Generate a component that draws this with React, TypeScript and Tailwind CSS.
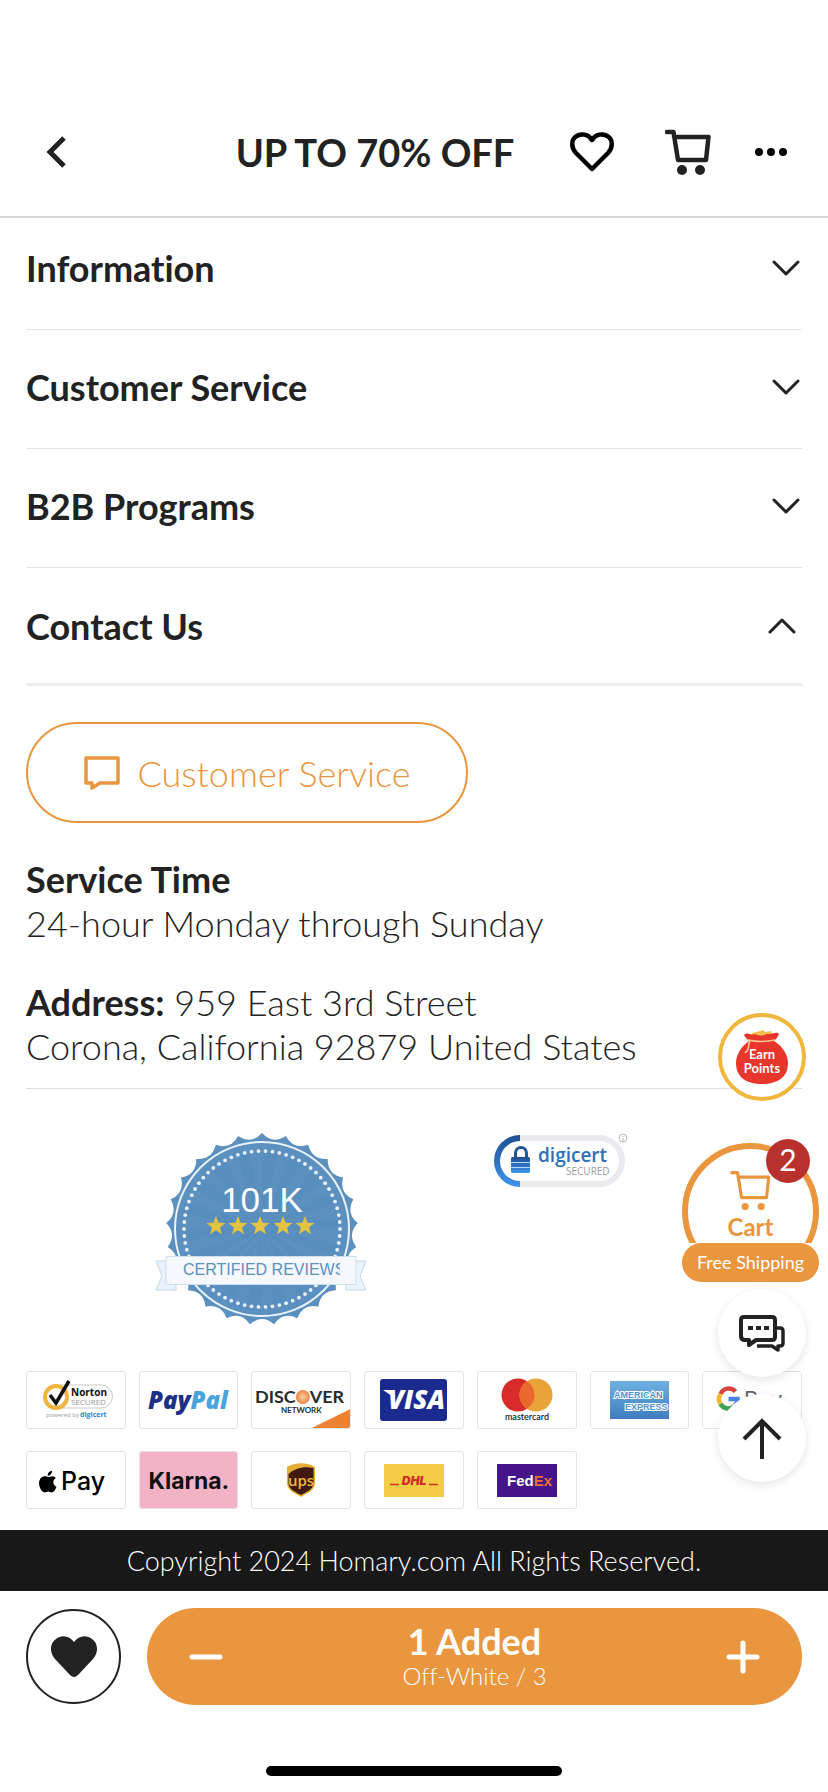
import { useState } from 'react';

const SECTIONS = ['Information', 'Customer Service', 'B2B Programs', 'Contact Us'];

// Star-edged outline of the review seal
const SPIKES = 25;
const sealPoint = (radius: number, step: number) => {
  const angle = (step / SPIKES) * Math.PI * 2;
  return `${(107 + radius * Math.sin(angle)).toFixed(2)} ${(97 - radius * Math.cos(angle)).toFixed(2)}`;
};
const SEAL_PATH =
  `M${sealPoint(96, 0)}` +
  Array.from({ length: SPIKES }, (_, i) => `Q${sealPoint(85, i + 0.5)} ${sealPoint(96, i + 1)}`).join('') +
  'Z';

function BackIcon() {
  return (
    <svg width="20" height="32" viewBox="0 0 20 32" fill="none" stroke="#222" strokeWidth="5">
      <path d="M18 2 4 16l14 14" />
    </svg>
  );
}

function HeartIcon() {
  return (
    <svg width="44" height="40" viewBox="0 0 44 40" fill="none" stroke="#000" strokeWidth="4.500" strokeLinejoin="round">
      <path d="M22 37 6 21C1 15.500 1 8 6 4.300 11 1 18.500 2 22 8 25.500 2 33 1 38 4.300c5 3.700 5 11.200 0 16.700Z" />
    </svg>
  );
}

function CartIcon({ thin = false }: { thin?: boolean }) {
  return (
    <svg
      width={thin ? 43 : 46}
      height={thin ? 41 : 46}
      viewBox="0 0 46 46"
      fill="none"
      stroke="currentColor"
      strokeWidth={thin ? 3.500 : 4.500}
      strokeLinecap="round"
      strokeLinejoin="round"
    >
      <path d="M2 3h6.500l4.500 28h28L43.500 8H9" />
      <circle cx="17" cy="41" r={thin ? 4 : 5} fill="currentColor" stroke="none" />
      <circle cx="35" cy="41" r={thin ? 4 : 5} fill="currentColor" stroke="none" />
    </svg>
  );
}

function Chevron({ up }: { up: boolean }) {
  return (
    <svg
      className={up ? 'mr-[6px] rotate-180' : 'mr-[2px]'}
      width="28"
      height="16"
      viewBox="0 0 28 16"
      fill="none"
      stroke="#222"
      strokeWidth="3"
      strokeLinecap="round"
      strokeLinejoin="round"
    >
      <path d="m2 2 12 12L26 2" />
    </svg>
  );
}

function ReviewSeal() {
  return (
    <svg width="212" height="194" viewBox="0 0 212 194" role="img" aria-label="Certified reviews">
      <path d={SEAL_PATH} fill="#5b90bf" />
      {Array.from({ length: 18 }, (_, i) => (
        <path key={i} d="M107 97 100 20h14Z" fill="#4f86b8" opacity="0.25" transform={`rotate(${i * 20 + 6} 107 97)`} />
      ))}
      <circle cx="107" cy="97" r="87" fill="none" stroke="#e8f3fc" strokeWidth="2" />
      {Array.from({ length: 70 }, (_, i) => {
        const a = (i / 70) * Math.PI * 2;
        return <circle key={i} cx={107 + 78 * Math.cos(a)} cy={97 + 78 * Math.sin(a)} r="1.900" fill="#e8f3fc" />;
      })}
      <text x="107" y="80" textAnchor="middle" fontFamily="Liberation Sans, sans-serif" fontSize="35" fill="#fff">
        101K
      </text>
      {[61, 83, 105, 128, 150].map((x) => (
        <path
          key={x}
          transform={`translate(${x} 94)`}
          d="M0-10 2.600-3.300 9.500-3 4.100 1.400 6 8.200 0 4.300-6 8.200-4.100 1.400-9.500-3-2.600-3.300Z"
          fill="#e3c341"
        />
      ))}
      <path d="M12 129H1l6 15-6 14h20v-6H12ZM200 129h11l-6 15 6 14h-20v-6h9Z" fill="#e9f3fd" stroke="#c3d6ea" />
      <path d="M11 124.500h190v28H11Z" fill="#f5f9fe" stroke="#cfdff0" />
      <svg x="27" y="125" width="158" height="27">
        <text x="1" y="18" fontFamily="Liberation Sans, sans-serif" fontSize="16" fill="#5b90bf">
          CERTIFIED REVIEWS
        </text>
      </svg>
    </svg>
  );
}

function DigicertBadge() {
  return (
    <svg width="136" height="58" viewBox="0 0 136 58" role="img" aria-label="DigiCert secured">
      <defs>
        <linearGradient id="digi" x1="0" y1="0" x2="0" y2="1">
          <stop offset="0" stopColor="#1f4f8f" />
          <stop offset="1" stopColor="#3f95f0" />
        </linearGradient>
      </defs>
      <rect x="3" y="6" width="125" height="46" rx="23" fill="#fff" stroke="#e9ebee" strokeWidth="6" />
      <path d="M26 3a26 26 0 0 0 0 52v-6a20 20 0 0 1 0-40Z" fill="url(#digi)" />
      <path d="M21.500 26v-5a5.500 5.500 0 0 1 11 0v5" fill="none" stroke="#1f5798" strokeWidth="3" />
      <rect x="17" y="25" width="19" height="16" rx="1.500" fill="url(#digi)" />
      <path d="M17 30.500h19M17 35.500h19" stroke="#b9d7f5" />
      <text x="44" y="30" fontFamily="Open Sans, sans-serif" fontSize="19" fontWeight="600" fill="#2d70b8">
        digicert
      </text>
      <text x="72" y="43" fontFamily="Open Sans, sans-serif" fontSize="10" fill="#9a9da1">
        SECURED
      </text>
      <circle cx="129" cy="6" r="4" fill="#fff" stroke="#b8b8b8" />
      <path d="M129 4v1M129 6v3" stroke="#b8b8b8" />
    </svg>
  );
}

function Norton() {
  return (
    <svg width="78" height="44" viewBox="0 0 78 44">
      <path d="M22 7h42a11 11 0 0 1 0 23H22" fill="none" stroke="#c9c9c9" />
      <circle cx="19" cy="19" r="11" fill="#fff" stroke="#efb53f" strokeWidth="4" />
      <path d="m13 17 6 8L32 3" fill="none" stroke="#111" strokeWidth="3.500" />
      <text x="34" y="18" fontFamily="Open Sans, sans-serif" fontSize="10" fontWeight="700" fill="#111">
        Norton
      </text>
      <text x="34" y="27" fontFamily="Open Sans, sans-serif" fontSize="8" fill="#999">
        SECURED
      </text>
      <text x="9" y="39" fontFamily="Open Sans, sans-serif" fontSize="6" fill="#999">
        powered by
      </text>
      <text x="43" y="39" fontFamily="Open Sans, sans-serif" fontSize="7" fontWeight="700" fill="#2b84d6">
        digicert
      </text>
    </svg>
  );
}

function PayPal() {
  return (
    <svg width="92" height="40" viewBox="0 0 92 40">
      <text x="5" y="29" fontFamily="Open Sans, sans-serif" fontSize="24" fontWeight="800" fontStyle="italic" fill="#1c2f84">
        Pay<tspan fill="#4aa3db">Pal</tspan>
      </text>
    </svg>
  );
}

function Discover() {
  return (
    <svg className="h-full w-full" viewBox="0 0 98 56">
      <defs>
        <radialGradient id="disc">
          <stop offset="0" stopColor="#fbd0a4" />
          <stop offset="1" stopColor="#ee8442" />
        </radialGradient>
      </defs>
      <path d="M58 57 99 37v20Z" fill="#ec8234" />
      <g fontFamily="Lato, sans-serif" fill="#2a2a2a" fontWeight="700">
        <text x="3" y="31" fontSize="18">
          DISC
        </text>
        <text x="58" y="31" fontSize="18">
          VER
        </text>
        <text x="29" y="41" fontSize="8">
          NETWORK
        </text>
      </g>
      <circle cx="51" cy="25" r="7" fill="url(#disc)" />
    </svg>
  );
}

function Visa() {
  return (
    <svg width="67" height="42" viewBox="0 0 67 42">
      <rect width="67" height="42" rx="3" fill="#1a2a8f" />
      <path d="M3 11h8l4 8Z" fill="#fff" />
      <text x="8" y="30" fontFamily="Open Sans, sans-serif" fontSize="26" fontWeight="800" fontStyle="italic" fill="#fff">
        VISA
      </text>
    </svg>
  );
}

function Mastercard() {
  return (
    <svg width="52" height="44" viewBox="0 0 52 44">
      <circle cx="17" cy="17" r="16.500" fill="#d92b2b" />
      <circle cx="35" cy="17" r="16.500" fill="#e8a33b" />
      <path d="M26 3.200a16.500 16.500 0 0 1 0 27.600 16.500 16.500 0 0 1 0-27.600Z" fill="#ea682d" />
      <text x="26" y="42" textAnchor="middle" fontFamily="Lato, sans-serif" fontSize="9" fontWeight="600" fill="#222">
        mastercard
      </text>
    </svg>
  );
}

function Amex() {
  return (
    <svg width="59" height="38" viewBox="0 0 59 38">
      <defs>
        <linearGradient id="amex" x1="0" y1="0" x2="0" y2="1">
          <stop offset="0" stopColor="#6db1e0" />
          <stop offset="1" stopColor="#3f7dbf" />
        </linearGradient>
      </defs>
      <rect width="59" height="38" fill="url(#amex)" />
      <g fontFamily="Liberation Sans, sans-serif" fontWeight="700" fill="#4f94d0" stroke="#fff" strokeWidth="2" paintOrder="stroke">
        <text x="4" y="17" fontSize="9">
          AMERICAN
        </text>
        <text x="15" y="29" fontSize="9">
          EXPRESS
        </text>
      </g>
    </svg>
  );
}

function GooglePay() {
  return (
    <svg width="72" height="32" viewBox="0 0 72 32">
      <g fill="none" strokeWidth="4.500">
        <path d="M19.500 7.500A9 9 0 0 0 4.500 10" stroke="#d9453a" />
        <path d="M4.500 10a9 9 0 0 0 0 10" stroke="#f2bb2e" />
        <path d="M4.500 20a9 9 0 0 0 14 2" stroke="#3fa353" />
        <path d="M18.500 22a9 9 0 0 0 3-7h-9" stroke="#4b80e8" />
      </g>
      <text x="28" y="23" fontFamily="Inter, sans-serif" fontSize="22" fill="#5f6368">
        Pay
      </text>
    </svg>
  );
}

function ApplePay() {
  return (
    <svg width="78" height="44" viewBox="0 0 78 44">
      <path
        transform="translate(-2 12)"
        d="M13 7c1.500 0 3.500-1.300 5.200-.6 1 .2 2 .8 2.600 1.700-3.600 2.200-3 7.300.7 8.700-.8 2.200-2.500 5.600-4.800 5.600-1.400 0-1.800-.9-3.500-.9s-2.200.9-3.500.9C6.500 22.400 3 15.500 4.300 11 5 8 7.700 6.200 10 6.300c1.200 0 2.300.7 3 .7Zm-.3-1.200C12.500 3 14.700.9 17 .7c.3 2.600-2 5-4.300 5.100Z"
        fill="#000"
      />
      <text x="24" y="32" fontFamily="Inter, sans-serif" fontSize="25" fontWeight="500" fill="#000">
        Pay
      </text>
    </svg>
  );
}

function Klarna() {
  return (
    <svg className="h-full w-full bg-[#f3b3c7]" viewBox="0 0 98 56">
      <text x="49" y="37" textAnchor="middle" fontFamily="Inter, sans-serif" fontSize="23" fontWeight="700" fill="#111">
        Klarna.
      </text>
    </svg>
  );
}

function Ups() {
  return (
    <svg width="28" height="34" viewBox="0 0 28 34">
      <path d="M0 4C8-1 20-1 28 4v16c0 7-7 10-14 14C7 30 0 27 0 20Z" fill="#e5ad35" />
      <path d="M1.500 11C8 5 17 3 26.500 5v15c0 6-6 8.500-12.500 12C7.500 28.500 1.500 26 1.500 20Z" fill="#3f1a10" />
      <text x="14" y="23" textAnchor="middle" fontFamily="Open Sans, sans-serif" fontSize="15" fontWeight="600" fill="#f0b93c">
        ups
      </text>
    </svg>
  );
}

function Dhl() {
  return (
    <svg width="60" height="33" viewBox="0 0 60 33">
      <rect width="60" height="33" fill="#f5cc45" />
      <path d="M6 20.500h9M45 20.500h9" stroke="#cf2f26" strokeWidth="1.500" />
      <text x="30" y="21" textAnchor="middle" fontFamily="Inter, sans-serif" fontSize="12" fontWeight="900" fontStyle="italic" fill="#cf2f26">
        DHL
      </text>
    </svg>
  );
}

function FedEx() {
  return (
    <svg width="60" height="33" viewBox="0 0 60 33">
      <rect width="60" height="33" fill="#47158a" />
      <text x="10" y="22" fontFamily="Liberation Sans, sans-serif" fontSize="15" fontWeight="700" fill="#fff">
        Fed<tspan fill="#ec6d2d">Ex</tspan>
      </text>
      <circle cx="53" cy="21" r="1" fill="#ec6d2d" />
    </svg>
  );
}

const BADGES = [Norton, PayPal, Discover, Visa, Mastercard, Amex, GooglePay, ApplePay, Klarna, Ups, Dhl, FedEx];

function FloatingActions() {
  return (
    <aside className="absolute right-[9px] bottom-12 flex flex-col items-end">
      <button
        type="button"
        aria-label="Earn Points"
        className="mr-[13px] flex size-[88px] items-center justify-center rounded-full border-4 border-[#efb73e] bg-white"
      >
        <svg width="54" height="56" viewBox="0 0 54 56">
          <path d="m17 4 8-2 3-1 2 2 6-1 2 6H16Z" fill="#f0c04a" />
          <path d="M9 6c4-4 7 1 11-1 4 2 8 2 12 0 5 1 9-3 12 0-1 3-3 5-5 7 8 5 14 13 14 22 0 16-13 21-26 21S1 50 1 34c0-9 6-17 13-22-2-2-4-4-5-6Z" fill="#e8362c" />
          <path d="M13 11c9 2 18 2 27 0M15 12c-3 4 1 7-5 12" fill="none" stroke="#f6c98c" strokeWidth="1.500" />
          <text x="27" y="30" textAnchor="middle" fontSize="13" fontWeight="700" fill="#fff">
            Earn
          </text>
          <text x="27" y="44" textAnchor="middle" fontSize="13" fontWeight="700" fill="#fff">
            Points
          </text>
        </svg>
      </button>

      <button type="button" className="relative mt-[42px] flex w-[137px] flex-col items-center text-[#ea963e]">
        <span className="flex h-[100px] w-full justify-center overflow-hidden">
          <span className="flex h-[137px] w-full shrink-0 flex-col items-center rounded-full border-[6px] border-[#ea963e] bg-white pt-[21px]">
            <CartIcon thin />
            <span className="text-2xl font-bold">Cart</span>
          </span>
        </span>
        <span className="w-full rounded-full bg-[#ea963e] text-center text-lg leading-[39px] text-white">Free Shipping</span>
        <span className="absolute -top-1 right-[9px] size-11 rounded-full bg-[#b9312c] text-center text-3xl leading-[40px] text-white">
          2
        </span>
      </button>

      <button
        type="button"
        aria-label="Chat"
        className="mt-[7px] mr-[13px] flex size-[88px] items-center justify-center rounded-full bg-white shadow-[0_3px_10px_rgba(0,0,0,0.1)]"
      >
        <svg width="46" height="38" viewBox="0 0 46 38" fill="none" stroke="#222" strokeWidth="4" strokeLinejoin="round">
          <path d="M5 3h28q3 0 3 3v17q0 3-3 3H17l-7 5v-5H6q-4 0-4-4V6q0-3 3-3Z" />
          <path d="M38 14h3q3 0 3 3v12q0 3-3 3h-2v4l-6-4H18" strokeWidth="3.500" />
          <path d="M9 14h5M17 14h5M25 14h5" strokeLinecap="butt" />
        </svg>
      </button>

      <button
        type="button"
        aria-label="Back to top"
        className="mt-[17px] mr-[13px] flex size-[88px] items-center justify-center rounded-full bg-white shadow-[0_3px_10px_rgba(0,0,0,0.1)]"
      >
        <svg width="40" height="42" viewBox="0 0 40 42" fill="none" stroke="#222" strokeWidth="4">
          <path d="M20 42V3M2 22 20 4l18 18" />
        </svg>
      </button>
    </aside>
  );
}

export default function App() {
  const [open, setOpen] = useState('Contact Us');

  return (
    <div className="bg-white font-[Lato,sans-serif] text-[#222] [font-variant-ligatures:none]">
      <header className="flex items-center border-b-2 border-[#d8d8d8] pt-[88px] pr-[41px] pl-[46px]">
        <button type="button" aria-label="Back" className="flex h-32 w-[146px] items-center">
          <BackIcon />
        </button>
        <h1 className="flex-1 text-center text-[38px] font-bold whitespace-nowrap">UP TO 70% OFF</h1>
        <button type="button" aria-label="Wishlist" className="ml-[12px]">
          <HeartIcon />
        </button>
        <button type="button" aria-label="Cart" className="ml-[51px]">
          <CartIcon />
        </button>
        <button type="button" aria-label="More" className="ml-[44px]">
          <svg width="32" height="8" viewBox="0 0 32 8">
            <circle cx="4" cy="4" r="4" />
            <circle cx="16" cy="4" r="4" />
            <circle cx="28" cy="4" r="4" />
          </svg>
        </button>
      </header>

      <main className="relative pb-[21px]">
        <div className="px-[26px]">
          {SECTIONS.map((title) => (
            <button
              key={title}
              type="button"
              aria-expanded={open === title}
              onClick={() => setOpen(open === title ? '' : title)}
              className="flex h-[119px] w-full items-center justify-between border-b border-[#e3e3e3] pb-1 text-left text-[36px] font-bold first:h-[112px] first:pb-3 last:h-[118px] last:border-b-[3px] last:border-[#eee] last:pb-0"
            >
              {title}
              <Chevron up={open === title} />
            </button>
          ))}
        </div>

        {open === 'Contact Us' && (
          <section className="mx-[26px] border-b border-[#ddd] pt-9 pb-[20px] text-[36px] leading-[44px] font-light">
            <button
              type="button"
              className="flex h-[101px] w-[442px] items-center justify-center gap-[18px] rounded-full border-2 border-[#ea963e] text-[#ea963e]"
            >
              <svg width="36" height="34" viewBox="0 0 36 34" fill="none" stroke="currentColor" strokeWidth="3.500" strokeLinejoin="round">
                <path d="M2 2h32v25H16l-8 5v-5H2Z" />
              </svg>
              Customer Service
            </button>
            <p className="mt-[34px]">
              <strong className="font-bold">Service Time</strong>
              <br />
              24-hour Monday through Sunday
            </p>
            <p className="mt-[35px]">
              <strong className="font-bold">Address:</strong> 959 East 3rd Street
              <br />
              Corona, California 92879 United States
            </p>
          </section>
        )}

        <div className="flex items-start gap-[127px] pt-[43px] pl-[155px]">
          <ReviewSeal />
          <DigicertBadge />
        </div>

        <ul className="mx-[26px] mt-[45px] grid grid-cols-7 gap-x-[13px] gap-y-[22px]">
          {BADGES.map((Badge) => (
            <li key={Badge.name} className="flex h-[58px] items-center justify-center overflow-hidden rounded-[3px] border border-[#e4e4e4]">
              <Badge />
            </li>
          ))}
        </ul>

        <FloatingActions />
      </main>

      <footer>
        <p className="bg-[#181818] text-center text-[27px] leading-[61px] font-light text-white">
          Copyright 2024 Homary.com All Rights Reserved.
        </p>
        <div className="flex items-center gap-[26px] px-[26px] pt-[17px]">
          <button
            type="button"
            aria-label="Add to wishlist"
            className="flex size-[95px] items-center justify-center rounded-full border-2 border-[#222]"
          >
            <svg width="46" height="42" viewBox="0 0 46 42">
              <path d="M19 39 4 23C-2 16-1 7 5 3c6-5 14-3 18 3 4-6 12-8 18-3 6 4 7 13 1 20L27 39q-4 4-8 0Z" fill="#222" />
            </svg>
          </button>
          <div className="flex h-[97px] flex-1 items-center justify-between rounded-full bg-[#ea963e] px-[42px] text-white">
            <button type="button" aria-label="Remove one">
              <svg width="34" height="34" viewBox="0 0 34 34" stroke="currentColor" strokeWidth="5" strokeLinecap="round">
                <path d="M3 17h28" />
              </svg>
            </button>
            <div className="text-center">
              <p className="text-[36px] leading-[38px] font-bold">1 Added</p>
              <p className="text-2xl leading-[32px] font-light">Off-White / 3</p>
            </div>
            <button type="button" aria-label="Add one">
              <svg width="34" height="34" viewBox="0 0 34 34" stroke="currentColor" strokeWidth="5" strokeLinecap="round">
                <path d="M3 17h28M17 3v28" />
              </svg>
            </button>
          </div>
        </div>
        <div className="mx-auto mt-[61px] mb-4 h-[10px] w-[296px] rounded-full bg-black" />
      </footer>
    </div>
  );
}
